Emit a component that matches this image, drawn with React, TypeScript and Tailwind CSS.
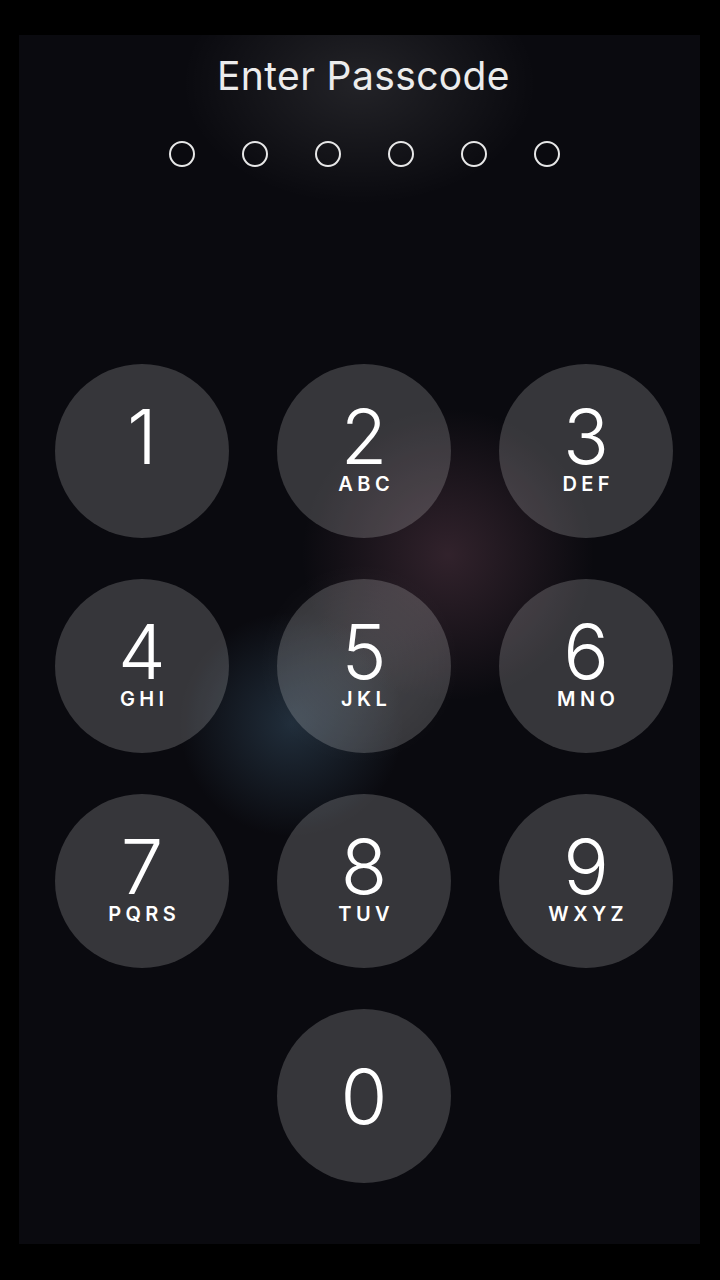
const keys = [
  { d: "1", l: "" },
  { d: "2", l: "ABC" },
  { d: "3", l: "DEF" },
  { d: "4", l: "GHI" },
  { d: "5", l: "JKL" },
  { d: "6", l: "MNO" },
  { d: "7", l: "PQRS" },
  { d: "8", l: "TUV" },
  { d: "9", l: "WXYZ" },
];

function Key({ d, l }: { d: string; l: string }) {
  return (
    <button className="w-[174px] h-[174px] rounded-full bg-white/[0.18] flex flex-col items-center pt-[37px] text-white">
      <span className="text-[76px] leading-[70px] font-light">{d}</span>
      {l && (
        <span className="mt-[3px] text-[20px] leading-none font-semibold tracking-[0.22em] pl-[0.22em]">{l}</span>
      )}
    </button>
  );
}

export default function App() {
  return (
    <div className="w-[720px] h-[1280px] bg-black pt-[35px] pl-[19px] pr-[20px] pb-[36px] font-['Inter',sans-serif]">
      <div className="h-full w-full bg-[#0a0a0f] bg-[radial-gradient(ellipse_26%_10%_at_50%_4%,rgba(255,255,255,0.1),transparent),radial-gradient(circle_at_63%_43%,rgba(140,90,110,0.3),transparent_18%),radial-gradient(circle_at_40%_57%,rgba(80,120,150,0.32),transparent_14%),radial-gradient(circle_at_50%_52%,rgba(255,255,255,0.07),transparent_14%)] flex flex-col">
        {/* Header */}
        <h1 className="mt-[18px] pl-[8px] text-center text-[39px] tracking-[0.01em] text-[#ececec] leading-[1.2]">Enter Passcode</h1>
        <div className="mt-[41px] flex justify-center gap-[47px] pl-[9px]">
          {Array.from({ length: 6 }).map((_, i) => (
            <span key={i} className="w-[26px] h-[26px] rounded-full border-2 border-white/90" />
          ))}
        </div>

        {/* Keypad */}
        <div className="mt-[197px] pl-[36px] grid grid-cols-[174px_174px_174px] gap-x-[48px] gap-y-[41px]">
          {keys.map((k) => (
            <Key key={k.d} d={k.d} l={k.l} />
          ))}
          <div />
          <button className="w-[174px] h-[174px] rounded-full bg-white/[0.18] flex items-center justify-center text-white">
            <span className="text-[76px] leading-none font-light">0</span>
          </button>
        </div>
      </div>
    </div>
  );
}
